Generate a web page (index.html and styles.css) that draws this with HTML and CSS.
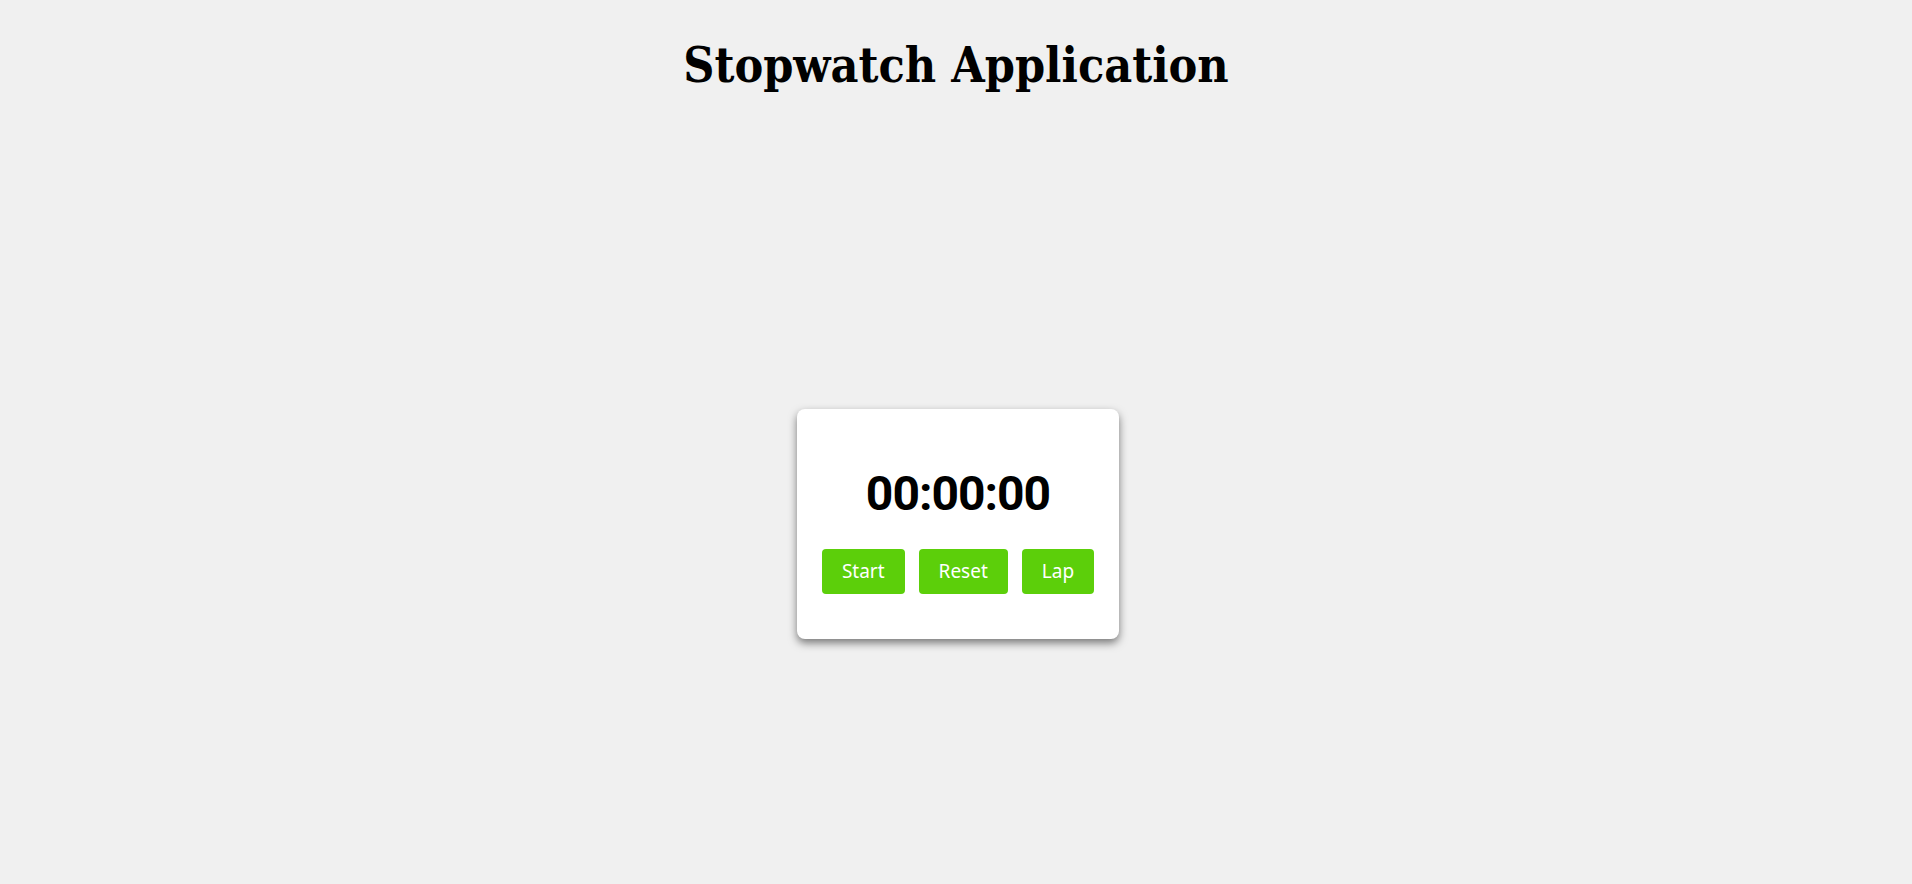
FILE: index.html
```html
<!DOCTYPE html>
<html lang="en">
<head>
<meta charset="utf-8">
<title>Stopwatch Application</title>
<link rel="stylesheet" href="styles.css">
</head>
<body>
<h1 class="title">Stopwatch Application</h1>
<main class="stage">
  <section class="card">
    <div class="timer">00:00:00</div>
    <div class="controls">
      <button class="btn">Start</button>
      <button class="btn">Reset</button>
      <button class="btn">Lap</button>
    </div>
  </section>
</main>
</body>
</html>
```

FILE: styles.css
```css
html, body {
  margin: 0;
  padding: 0;
}
body {
  background: #f0f0f0;
  font-family: "Noto Sans", sans-serif;
  min-height: 884px;
}
.title {
  margin: 0;
  padding-top: 37px;
  text-align: center;
  font-family: "DejaVu Serif Condensed", "DejaVu Serif", serif;
  font-stretch: condensed;
  font-weight: bold;
  font-size: 48px;
  line-height: 56px;
  color: #000;
}
.stage {
  display: flex;
  justify-content: center;
  padding-top: 316px;
  padding-left: 4px;
}
.card {
  background: #fff;
  border-radius: 8px;
  box-shadow: 0 4px 8px rgba(0, 0, 0, 0.5);
  padding: 57px 25px 45px;
  display: flex;
  flex-direction: column;
  align-items: center;
}
.timer {
  font-family: Roboto, sans-serif;
  font-weight: bold;
  font-size: 48px;
  line-height: 56px;
  letter-spacing: -1px;
  color: #000;
  margin-bottom: 27px;
}
.controls {
  display: flex;
  gap: 14px;
}
.btn {
  font-family: "Noto Sans", sans-serif;
  font-size: 19px;
  line-height: 25px;
  color: #fff;
  background: #5ccf0a;
  border: none;
  border-radius: 4px;
  padding: 10px 20px;
  cursor: pointer;
}
```
